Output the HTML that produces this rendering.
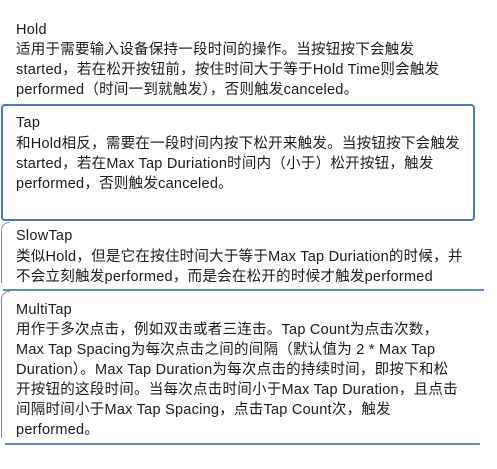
<!DOCTYPE html>
<html><head><meta charset="utf-8"><style>
html,body{margin:0;padding:0;background:#fff;width:497px;height:469px;overflow:hidden;position:relative}
.l{position:absolute;left:16px;white-space:nowrap;font-family:"Liberation Sans","Noto Sans CJK SC",sans-serif;font-size:14.5px;line-height:20px;color:#1b1b1b;letter-spacing:0.25px}
.box{position:absolute;left:1px;top:104px;width:470px;height:113px;border:2.5px solid #4a76c2;border-radius:4px}
.hl{position:absolute;height:2px;background:#5b89cc}
.arc{position:absolute;border-left:1px solid #888;border-top:1px solid #888;border-radius:8px 0 0 0;width:8px}
</style></head><body>
<div class="l" style="top:20px">Hold</div>
<div class="l" style="top:40px">适用于需要输入设备保持一段时间的操作。当按钮按下会触发</div>
<div class="l" style="top:60px">started，若在松开按钮前，按住时间大于等于Hold Time则会触发</div>
<div class="l" style="top:80px">performed（时间一到就触发），否则触发canceled。</div>
<div class="box"></div>
<div class="l" style="top:113px">Tap</div>
<div class="l" style="top:134px">和Hold相反，需要在一段时间内按下松开来触发。当按钮按下会触发</div>
<div class="l" style="top:154px">started，若在Max Tap Duriation时间内（小于）松开按钮，触发</div>
<div class="l" style="top:174px">performed，否则触发canceled。</div>
<div class="arc" style="left:1px;top:222px;height:60px"></div>
<div class="l" style="top:226px">SlowTap</div>
<div class="l" style="top:247px">类似Hold，但是它在按住时间大于等于Max Tap Duriation的时候，并</div>
<div class="l" style="top:267px">不会立刻触发performed，而是会在松开的时候才触发performed</div>
<div class="hl" style="left:3px;top:289px;width:481px"></div>
<div class="arc" style="left:1px;top:291px;height:146px"></div>
<div class="l" style="top:300px">MultiTap</div>
<div class="l" style="top:320px">用作于多次点击，例如双击或者三连击。Tap Count为点击次数，</div>
<div class="l" style="top:340px">Max Tap Spacing为每次点击之间的间隔（默认值为 2 * Max Tap</div>
<div class="l" style="top:360px">Duration）。Max Tap Duration为每次点击的持续时间，即按下和松</div>
<div class="l" style="top:380px">开按钮的这段时间。当每次点击时间小于Max Tap Duration，且点击</div>
<div class="l" style="top:400px">间隔时间小于Max Tap Spacing，点击Tap Count次，触发</div>
<div class="l" style="top:420px">performed。</div>
<div class="hl" style="left:5px;top:443px;width:475px"></div>
<div class="l" style="top:466px">Press</div>
</body></html>
